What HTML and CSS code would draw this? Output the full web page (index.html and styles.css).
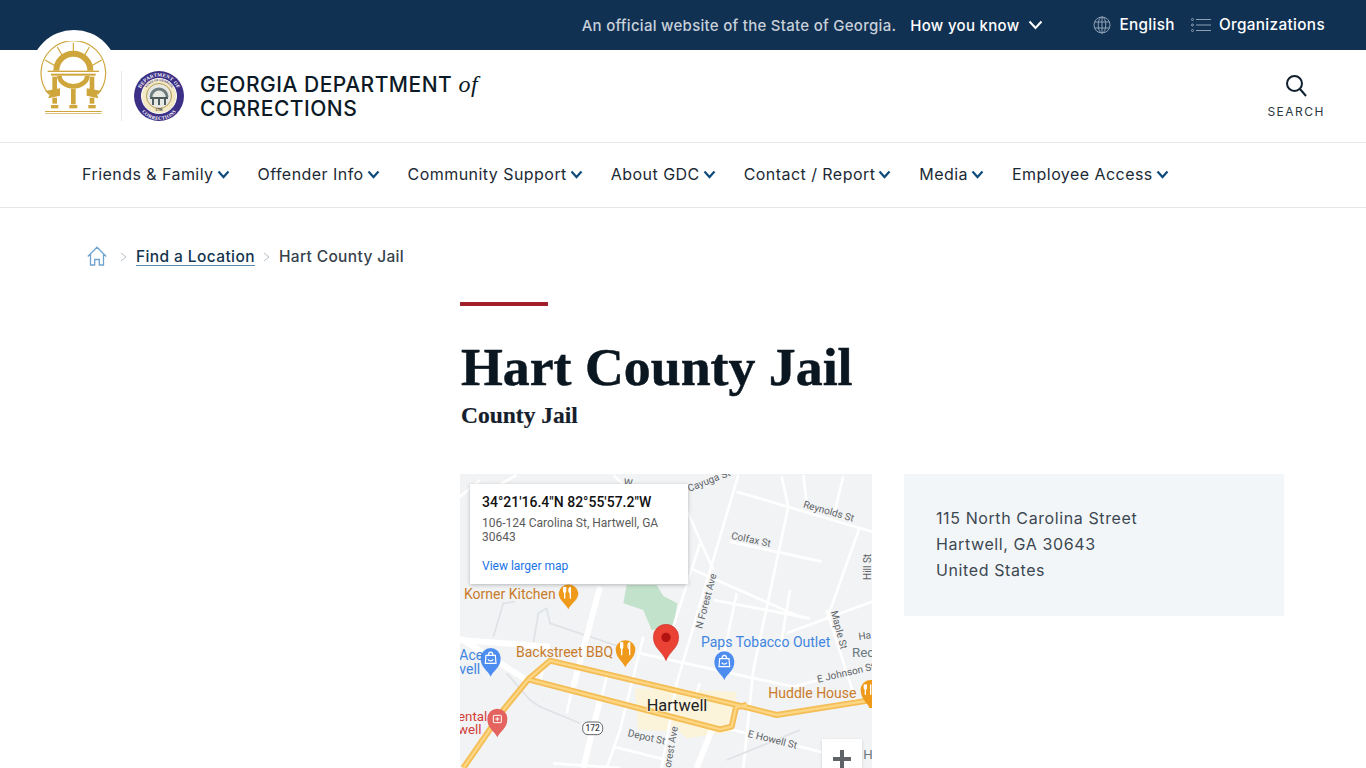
FILE: index.html
```html
<!DOCTYPE html>
<html lang="en">
<head>
<meta charset="utf-8">
<title>Hart County Jail</title>
<link rel="stylesheet" href="styles.css">
</head>
<body>
<div class="topbar">
  <span class="official">An official website of the State of Georgia.</span>
  <a class="know">How you know
    <svg class="know-chev" width="15" height="10" viewBox="0 0 15 10"><path d="M1.500 1.500 7.500 8l6-6.500" fill="none" stroke="#fff" stroke-width="2"/></svg>
  </a>
  <a class="util util-lang">
    <svg width="18" height="18" viewBox="0 0 18 18" fill="none" stroke="#8fa0b3" stroke-width="1"><circle cx="9" cy="9" r="8"/><ellipse cx="9" cy="9" rx="3.800" ry="8"/><path d="M9 1v16M1.500 6h15M1.500 12h15"/></svg>
    English</a>
  <a class="util">
    <svg width="20" height="14" viewBox="0 0 20 14" fill="none" stroke="#8fa0b3" stroke-width="1"><path d="M5 1.500h15M5 7h15M5 12.500h15"/><circle cx="1.500" cy="1.500" r="1"/><circle cx="1.500" cy="7" r="1"/><circle cx="1.500" cy="12.500" r="1"/></svg>
    Organizations</a>
</div>

<header class="masthead">
  <div class="emblem">
    <svg width="70" height="76" viewBox="42 48 210 228">
      <g fill="none" stroke="#cfa63c">
        <path d="M72 208A97 97 0 1 1 218 208" stroke-width="3.500"/>
        <path d="M145 53v35M97 66l18 31M193 66l-18 31M60 105l30 17M230 105l-30 17" stroke-width="3.500"/>
        <path d="M94 137A51 51 0 0 1 196 137" stroke-width="18"/>
        <path d="M103 152A42 32 0 0 0 187 152" stroke-width="14"/>
      </g>
      <g fill="#cfa63c">
        <rect x="68" y="137" width="154" height="4"/>
        <rect x="78" y="146" width="134" height="6"/>
        <rect x="82" y="155" width="14" height="40"/>
        <rect x="194" y="155" width="14" height="40"/>
        <rect x="138" y="192" width="14" height="46"/>
        <path d="M60 198 105 190V212L70 220 74 208zM230 198 185 190V212L220 220 216 208z"/>
        <rect x="82" y="218" width="14" height="18"/>
        <rect x="194" y="218" width="14" height="18"/>
        <rect x="78" y="240" width="22" height="10"/>
        <rect x="133" y="240" width="24" height="10"/>
        <rect x="190" y="240" width="22" height="10"/>
        <rect x="60" y="258" width="170" height="3"/>
        <rect x="60" y="264" width="170" height="2"/>
      </g>
    </svg>
  </div>
  <div class="divider"></div>
  <svg class="seal" width="50" height="50" viewBox="0 0 50 50">
    <circle cx="25" cy="25" r="25" fill="#3b2f86"/>
    <circle cx="25" cy="25" r="17.500" fill="#f3e9c4" stroke="#fff" stroke-width="1"/>
    <circle cx="25" cy="25" r="12.500" fill="#e8e8e2" stroke="#a9892f" stroke-width=".8"/>
    <path id="sealTop" d="M5.500 25a19.500 19.500 0 0 1 39 0" fill="none"/>
    <path id="sealBot" d="M3 27a22 22 0 0 0 44 0" fill="none"/>
    <path id="sealIn" d="M10 25a15 15 0 0 1 30 0" fill="none"/>
    <text class="seal-text"><textPath href="#sealTop" startOffset="50%" text-anchor="middle">DEPARTMENT OF</textPath></text>
    <text class="seal-text"><textPath href="#sealBot" startOffset="50%" text-anchor="middle">CORRECTIONS</textPath></text>
    <text class="seal-inner"><textPath href="#sealIn" startOffset="50%" text-anchor="middle">STATE OF GEORGIA</textPath></text>
    <path d="M17 26a8 8 0 0 1 16 0" fill="none" stroke="#6f7d80" stroke-width="3"/>
    <path d="M16 26h18v2H16zM18 28h2v6h-2zM24 28h2v6h-2zM30 28h2v6h-2z" fill="#4f5d60"/>
    <text class="seal-year" x="25" y="40" text-anchor="middle">1796</text>
  </svg>
  <div class="agency">GEORGIA DEPARTMENT <em>of</em><br>CORRECTIONS</div>
  <a class="search">
    <svg width="24" height="24" viewBox="0 0 24 24" fill="none" stroke="#10202e" stroke-width="2"><circle cx="10.500" cy="10.500" r="7.500"/><path d="m16 16 6 7"/></svg>
    <span>SEARCH</span>
  </a>
</header>

<nav class="mainnav">
  <a class="navitem">Friends &amp; Family<svg class="chev" width="13" height="9" viewBox="0 0 13 9"><path d="M1.500 1.500 6.500 7l5-5.500"/></svg></a>
  <a class="navitem">Offender Info<svg class="chev" width="13" height="9" viewBox="0 0 13 9"><path d="M1.500 1.500 6.500 7l5-5.500"/></svg></a>
  <a class="navitem">Community Support<svg class="chev" width="13" height="9" viewBox="0 0 13 9"><path d="M1.500 1.500 6.500 7l5-5.500"/></svg></a>
  <a class="navitem">About GDC<svg class="chev" width="13" height="9" viewBox="0 0 13 9"><path d="M1.500 1.500 6.500 7l5-5.500"/></svg></a>
  <a class="navitem">Contact / Report<svg class="chev" width="13" height="9" viewBox="0 0 13 9"><path d="M1.500 1.500 6.500 7l5-5.500"/></svg></a>
  <a class="navitem">Media<svg class="chev" width="13" height="9" viewBox="0 0 13 9"><path d="M1.500 1.500 6.500 7l5-5.500"/></svg></a>
  <a class="navitem">Employee Access<svg class="chev" width="13" height="9" viewBox="0 0 13 9"><path d="M1.500 1.500 6.500 7l5-5.500"/></svg></a>
</nav>

<div class="crumbs">
  <svg width="20" height="20" viewBox="0 0 20 20" fill="none" stroke="#6fa3cf" stroke-width="1.300"><path d="M.8 10.500 10 1.200l9.200 9.300M3.500 8.500V19h4.200v-5.500h4.600V19h4.200V8.500"/></svg>
  <svg class="sep" width="7" height="10" viewBox="0 0 7 10"><path d="M1 1l5 4-5 4"/></svg>
  <a class="crumb-link">Find a Location</a>
  <svg class="sep sep-second" width="7" height="10" viewBox="0 0 7 10"><path d="M1 1l5 4-5 4"/></svg>
  <span class="crumb-current">Hart County Jail</span>
</div>

<main class="content">
  <div class="rule"></div>
  <h1>Hart County Jail</h1>
  <p class="subtitle">County Jail</p>
  <div class="columns">
    <div class="map">
      <svg class="map-svg" width="412" height="294" viewBox="0 12 1236 882">
        <rect x="0" y="12" width="1236" height="882" fill="#f1f3f4"/>
        <path d="M500 345 590 345 610 378 652 400 640 470 575 480 550 420 490 400z" fill="#c3e2cb"/>
        <path d="M525 655 830 665 815 785 680 805 660 785 535 780z" fill="#fcf4da"/>
        <g fill="none" stroke="#fff" stroke-width="8">
          <path d="M835 15 650 640 605 894"/>
          <path d="M965 20 985 110 880 600 850 894"/>
          <path d="M830 65 1236 185"/>
          <path d="M690 295 1030 445"/>
          <path d="M810 215 1085 275"/>
          <path d="M760 390 1050 445M980 490 1236 395"/>
          <path d="M530 548 1000 650 1236 590"/>
          <path d="M800 775 1100 850"/>
          <path d="M1200 170 1100 450M990 360 960 540M830 370 790 560M1100 420 1190 700"/>
          <path d="M1030 15 1040 100M1150 20 1120 140"/>
          <path d="M680 120 760 300M460 15 540 90M550 500 480 780 440 894"/>
          <path d="M720 220 640 470M280 880 480 894"/>
          <path d="M460 830 620 870M340 640 320 730M250 590 240 640M440 620 420 700M720 640 690 720"/>
          <path d="M100 55 170 15M0 80 60 30"/>
        </g>
        <g fill="none" stroke="#dfe2e6" stroke-width="5">
          <path d="M100 500 130 400 165 395M220 520 235 430 260 415 270 460 480 530"/>
          <path d="M140 610 210 690 240 710 360 760"/>
          <path d="M800 870 1020 780"/>
        </g>
        <g fill="none" stroke="#fff" stroke-width="18">
          <path d="M0 505 200 630"/>
          <path d="M420 350 340 650"/>
          <path d="M420 690 370 894"/>
          <path d="M755 780 710 894"/>
          <path d="M0 510 270 530"/>
        </g>
        <g fill="none" stroke="#f4bd55" stroke-width="18" stroke-linejoin="round">
          <path d="M10 894 130 720 205 628 270 572 810 700 860 712 950 735 1236 690"/>
          <path d="M205 628 780 778 815 770 828 712 860 705"/>
        </g>
        <g fill="none" stroke="#fdd684" stroke-width="7" stroke-linejoin="round">
          <path d="M10 894 130 720 205 628 270 572 810 700 860 712 950 735 1236 690"/>
          <path d="M205 628 780 778 815 770 828 712 860 705"/>
        </g>

        <g class="roadlabel">
          <text transform="translate(1028 112) rotate(16)">Reynolds St</text>
          <text transform="translate(812 206) rotate(12)">Colfax St</text>
          <text transform="translate(726 478) rotate(-75)">N Forest Ave</text>
          <text transform="translate(1112 425) rotate(75)">Maple St</text>
          <text transform="translate(1074 638) rotate(-13)">E Johnson St</text>
          <text transform="translate(862 800) rotate(14)">E Howell St</text>
          <text transform="translate(502 798) rotate(13)">Depot St</text>
          <text transform="translate(632 894) rotate(-80)">orest Ave</text>
          <text transform="translate(1233 330) rotate(-90)">Hill St</text>
          <text transform="translate(688 66) rotate(-22)">Cayuga St</text>
          <text transform="translate(490 46) rotate(8)">W</text>
          <text transform="translate(1197 510) rotate(-8)">Ha</text>
        </g>

        <path d="M325 418C316 398 296 392 296 368a30 30 0 0 1 59 0C355 392 334 398 325 418z" fill="#ef9a1a"/>
        <path d="M496 592C487 572 467 566 467 535a30 30 0 0 1 59 0C526 566 505 572 496 592z" fill="#ef9a1a"/>
        <path d="M1228 714C1222 696 1202 690 1202 658a30 30 0 0 1 34-28V714z" fill="#ef9a1a"/>
        <g fill="none" stroke="#fff" stroke-width="4" stroke-linecap="round">
          <path d="M311 352v12c0 4 6 4 6 0v-12M314 352v32M331 352v32M331 352c-6 4-6 14 0 18"/>
          <path d="M482 518v14c0 5 6 5 6 0v-14M485 518v36M509 518v36M509 518c-7 4-7 16 0 20"/>
          <path d="M1213 645v10c0 4 6 4 6 0v-10M1216 645v28M1232 645v28"/>
        </g>
        <path d="M92 620C83 600 62 594 62 564a30 30 0 0 1 60 0C122 594 101 600 92 620z" fill="#4e8df0"/>
        <path d="M793 630C784 610 763 604 763 574a30 30 0 0 1 60 0C823 604 802 610 793 630z" fill="#4e8df0"/>
        <g fill="none" stroke="#fff" stroke-width="3.500">
          <path d="M78 556h28l2 24H76zM85 556c0-13 14-13 14 0M84 568c4 6 12 6 16 0"/>
          <path d="M779 566h28l2 24h-32zM786 566c0-13 14-13 14 0M785 578c4 6 12 6 16 0"/>
        </g>
        <path d="M112 802C103 782 82 776 82 746a30 30 0 0 1 60 0C142 776 121 782 112 802z" fill="#e4635f"/>
        <rect x="100" y="736" width="24" height="22" rx="2" fill="none" stroke="#fff" stroke-width="3"/>
        <path d="M112 741v12M106 747h12" stroke="#fff" stroke-width="3"/>
        <path d="M618 572C608 544 580 535 580 501a38 38 0 0 1 76 0C656 535 628 544 618 572z" fill="#ea4335" stroke="#c5221f" stroke-width="1.500"/>
        <circle cx="618" cy="502" r="14" fill="#b31412"/>

        <rect x="368" y="756" width="60" height="38" rx="16" fill="#fff" stroke="#5f6368" stroke-width="3"/>
        <text class="shield" x="398" y="784" text-anchor="middle">172</text>

        <g class="lbl-orange">
          <text x="12" y="388">Korner Kitchen</text>
          <text x="168" y="562">Backstreet BBQ</text>
          <text x="925" y="685">Huddle House</text>
        </g>
        <g class="lbl-blue">
          <text x="723" y="530">Paps Tobacco Outlet</text>
          <text x="-2" y="570">Ace</text>
          <text x="-2" y="611">vell</text>
        </g>
        <g class="lbl-red">
          <text x="-6" y="752">ental</text>
          <text x="-6" y="792">well</text>
        </g>
        <text class="lbl-gray" x="1176" y="562">Rec</text>
        <text class="lbl-gray" x="1210" y="868">H</text>
        <text class="lbl-town" x="560" y="723">Hartwell</text>
      </svg>
      <div class="popup">
        <div class="popup-title">34°21'16.4"N 82°55'57.2"W</div>
        <div class="popup-addr">106-124 Carolina St, Hartwell, GA 30643</div>
        <a class="popup-link">View larger map</a>
      </div>
      <div class="zoom-btn"><svg width="18" height="18" viewBox="0 0 18 18"><path d="M7 0h4v7h7v4h-7v7H7v-7H0V7h7z" fill="#5f6368"/></svg></div>
    </div>
    <aside class="address">
      115 North Carolina Street<br>Hartwell, GA 30643<br>United States
    </aside>
  </div>
</main>
</body>
</html>
```
FILE: styles.css
```css
* { box-sizing: border-box; }
html, body { margin: 0; padding: 0; height: 768px; overflow: hidden; background: #fff; }
body { font-family: Inter, "Noto Sans", "Liberation Sans", sans-serif; color: #14202b; }

.topbar {
  height: 50px; background: #113153; color: #fff;
  display: flex; align-items: center; justify-content: flex-end;
  padding-right: 41px; font-size: 15px; font-weight: 500;
}
.official { color: #c7d0da; margin-right: 14px; letter-spacing: .28px; }
.know { display: flex; align-items: center; gap: 9px; margin-right: 50px; letter-spacing: .3px; }
.know-chev { display: block; }
.util { display: flex; align-items: center; gap: 8px; letter-spacing: .35px; font-size: 15.300px; padding-bottom: 2px; }
.util svg { margin-top: 2px; }
.util-lang { margin-right: 16px; gap: 8px; }

.masthead {
  height: 93px; border-bottom: 1px solid #e6e6e6; position: relative;
  display: flex; align-items: center; padding-left: 121px; padding-right: 41px;
}
.emblem {
  position: absolute; left: 30px; top: -20px; width: 88px; height: 88px;
  border-radius: 50%; background: #fff; display: flex; justify-content: center; padding: 11px 0 0 0;
}
.divider { width: 1px; height: 50px; background: #e8e8e8; margin-right: 12px; }
.seal { display: block; margin-right: 16px; }
.seal-text { font: 700 5px "Liberation Serif", serif; fill: #fff; letter-spacing: .2px; }
.seal-inner { font: 700 3px "Liberation Serif", serif; fill: #3b2f86; }
.seal-year { font: 700 3.500px "Liberation Serif", serif; fill: #2a2a2a; }
.agency { font-size: 21px; line-height: 24px; font-weight: 500; color: #0c1a26; letter-spacing: .5px; padding-top: 1px; }
.agency em { font-family: "Liberation Serif", serif; font-size: 24px; font-weight: 400; }
.search { margin-left: auto; display: flex; flex-direction: column; align-items: center; gap: 7px; font-size: 12px; letter-spacing: 1.500px; color: #2a3640; padding-bottom: 1px; }
.search svg { display: block; }

.mainnav {
  height: 65px; border-bottom: 1px solid #e6e6e6;
  display: flex; align-items: center; gap: 28px; padding: 0 0 3px 82px;
  font-size: 16px; color: #1c2a36;
}
.navitem { display: flex; align-items: center; gap: 3px; letter-spacing: .45px; }
.chev { fill: none; stroke: #0f4c7c; stroke-width: 2.200; display: block; margin-top: 2px; }

.crumbs {
  display: flex; align-items: center; padding: 39px 0 0 87px; height: 58px;
  font-size: 15.500px; font-weight: 500; color: #37424c;
}
.crumbs > svg:first-child { margin-top: -2px; }
.sep { fill: none; stroke: #b6bfc7; stroke-width: 1; margin: 0 9px 0 13px; display: block; }
.sep-second { margin-left: 8px; margin-right: 9px; }
.crumb-link { color: #14344f; text-decoration: underline; text-decoration-color: #5a8ab0; text-underline-offset: 3px; letter-spacing: .4px; }
.crumb-current { letter-spacing: .35px; }

.content { margin-left: 460px; padding-top: 36px; width: 824px; }
.rule { width: 88px; height: 4px; background: #a21e2b; }
h1 { margin: 31px 0 0 1px; font: 700 53.800px/60px "Liberation Serif", serif; color: #0b1720; -webkit-text-stroke: .5px #0b1720; }
.subtitle { margin: 3px 0 0 1px; font: 700 23.500px/30px "Liberation Serif", serif; color: #14202b; -webkit-text-stroke: .2px #14202b; }
.columns { display: grid; grid-template-columns: 412px 380px; gap: 32px; margin-top: 44px; align-items: start; }

.map { position: relative; width: 412px; height: 294px; overflow: hidden; }
.map-svg { display: block; }
.popup {
  position: absolute; left: 10px; top: 10px; width: 218px; height: 100px; background: #fff;
  box-shadow: 0 1px 4px rgba(0,0,0,.25); padding: 10px 12px; font-family: Roboto, sans-serif;
}
.popup-title { font-size: 14px; line-height: 17px; font-weight: 500; color: #111; }
.popup-addr { font-size: 12px; line-height: 14px; color: #5b5b5b; margin-top: 5px; width: 190px; }
.popup-link { display: block; font-size: 12px; line-height: 14px; color: #1a73e8; margin-top: 15px; }
.zoom-btn { position: absolute; left: 362px; top: 265px; width: 40px; height: 40px; background: #fff; display: flex; justify-content: center; padding-top: 11px; box-shadow: 0 1px 3px rgba(0,0,0,.15); }

.roadlabel { font: 400 30px Roboto, sans-serif; fill: #5f6368; stroke: #f1f3f4; stroke-width: 5px; paint-order: stroke; }
.shield { font: 500 25px Roboto, sans-serif; fill: #3c4043; }
.lbl-orange { font: 400 42px Roboto, sans-serif; fill: #c97b2b; }
.lbl-blue { font: 400 42px Roboto, sans-serif; fill: #4285e0; }
.lbl-red { font: 400 40px Roboto, sans-serif; fill: #d33b35; }
.lbl-gray { font: 400 40px Roboto, sans-serif; fill: #6b7a80; }
.lbl-town { font: 400 49px Roboto, sans-serif; fill: #202124; stroke: #fcf4da; stroke-width: 4px; paint-order: stroke; }

.address {
  background: #f3f6f9; height: 142px; padding: 31px 32px; font-size: 16px; line-height: 26px;
  color: #3c4852; letter-spacing: .6px;
}
```
